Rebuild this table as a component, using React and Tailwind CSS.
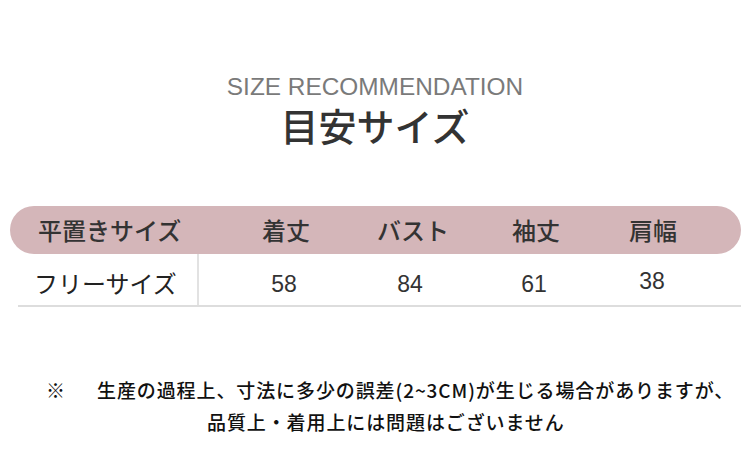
export default function App() {
  const jp = { fontFamily: '"Noto Sans CJK JP", "Noto Sans", sans-serif' };
  const ar = { fontFamily: '"Liberation Sans", Arial, sans-serif' };
  return (
    <div className="w-[750px] h-[476px] bg-white overflow-hidden flex flex-col">
      <div className="pt-[73px] text-center text-[24.4px] leading-[28px] text-[#7a7a7a]" style={ar}>
        SIZE RECOMMENDATION
      </div>
      <div className="mt-[5px] text-center text-[38px] leading-[38px] text-[#333333] font-medium" style={jp}>
        目安サイズ
      </div>

      <div
        className="mt-[62px] ml-[10px] w-[731px] h-[48px] rounded-full bg-[#d4b6b9] grid grid-cols-[188px_176px_78px_168px_66px] items-center text-[24px] leading-none text-[#333333] font-medium"
        style={jp}
      >
        <div className="pl-[28px]">平置きサイズ</div>
        <div className="text-center">着丈</div>
        <div className="text-center">バスト</div>
        <div className="text-center">袖丈</div>
        <div className="text-center">肩幅</div>
      </div>

      <div className="ml-[18px] w-[723px] h-[53px] border-b-2 border-[#dddddd] grid grid-cols-[181px_170px_82px_166px_70px] items-stretch">
        <div className="border-r-2 border-[#e2e2e2] pl-[16px] flex items-center pt-[6px] text-[24px] text-[#222222]" style={jp}>
          フリーサイズ
        </div>
        <div className="flex items-center justify-center pt-[10px] text-[23px] text-[#333333]" style={ar}>58</div>
        <div className="flex items-center justify-center pt-[10px] text-[23px] text-[#333333]" style={ar}>84</div>
        <div className="flex items-center justify-center pt-[10px] text-[23px] text-[#333333]" style={ar}>61</div>
        <div className="flex items-center justify-center pt-[4px] text-[23px] text-[#333333]" style={ar}>38</div>
      </div>

      <div className="mt-[67px] text-[19px] leading-[32px] tracking-[0.9px] text-[#111111] font-medium" style={jp}>
        <div className="flex">
          <span className="pl-[46px] w-[97px]">※</span>
          <span className="whitespace-nowrap">生産の過程上、寸法に多少の誤差(2~3CM)が生じる場合がありますが、</span>
        </div>
        <div className="pl-[207px] whitespace-nowrap">品質上・着用上には問題はございません</div>
      </div>
    </div>
  );
}
